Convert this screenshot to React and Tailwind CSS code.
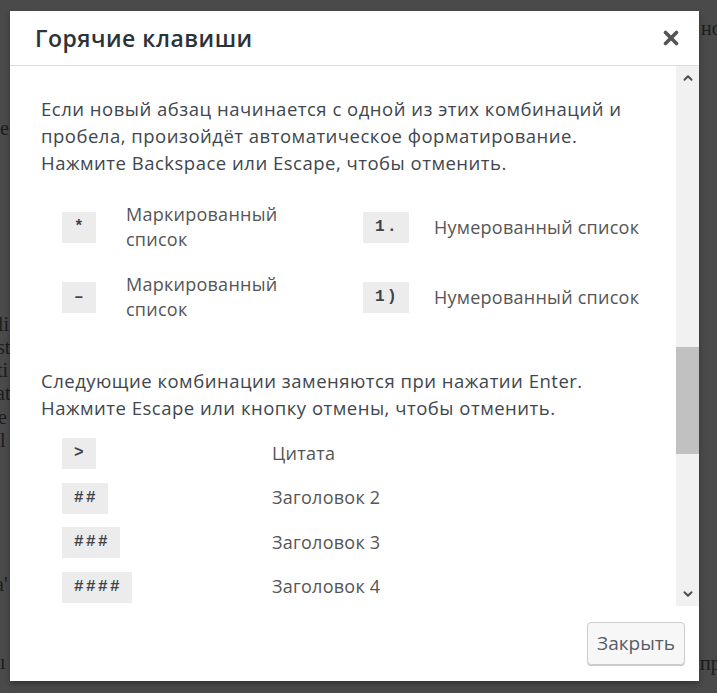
import React from 'react';
import { X, ChevronUp, ChevronDown } from 'lucide-react';

const UI_FONT = { fontFamily: '"Open Sans", "Noto Sans", sans-serif' };

const markdownRows = [
  { a: '*', aLabel: 'Маркированный список', b: '1.', bLabel: 'Нумерованный список' },
  { a: '–', aLabel: 'Маркированный список', b: '1)', bLabel: 'Нумерованный список' },
];

const enterRows = [
  { code: '>', label: 'Цитата' },
  { code: '##', label: 'Заголовок 2' },
  { code: '###', label: 'Заголовок 3' },
  { code: '####', label: 'Заголовок 4' },
];

function Kbd({ children }) {
  return (
    <code className="inline-flex h-[31px] items-center bg-[#ececec] pl-[12px] pr-[10px] font-['Liberation_Mono',monospace] text-[16px] font-bold tracking-[2.4px] text-[#3c434a]">
      {children}
    </code>
  );
}

// faint letters of the page that sits behind the overlay
const behind = [
  { t: 'e', x: 0, y: 118 },
  { t: 'li', x: -2, y: 314 },
  { t: 'st', x: -3, y: 337 },
  { t: 'ti', x: -3, y: 360 },
  { t: 'at', x: -4, y: 383 },
  { t: 'e', x: -2, y: 407 },
  { t: 'l', x: 0, y: 430 },
  { t: 'a\'', x: -5, y: 574 },
  { t: 'ı', x: 0, y: 652 },
  { t: 'но', x: 701, y: 18 },
  { t: 'пр', x: 700, y: 653 },
];

export default function App() {
  return (
    <div className="relative h-[693px] w-[717px] overflow-hidden bg-[#4a4a4a]">
      {behind.map((b, i) => (
        <span
          key={i}
          className="absolute font-['Liberation_Serif',serif] text-[20px] leading-none text-[#1c1c1c]"
          style={{ left: b.x, top: b.y }}
        >
          {b.t}
        </span>
      ))}

      {/* Dialog */}
      <div
        className="absolute left-[10px] top-[11px] flex h-[670px] w-[689px] flex-col bg-white shadow-[0_3px_6px_rgba(0,0,0,0.3)]"
        style={UI_FONT}
      >
        {/* Header */}
        <div className="flex h-[55px] shrink-0 items-center justify-between border-b border-[#dddddd] pl-[25px] pr-[17px]">
          <h1 className="text-[23px] font-semibold tracking-[0.5px] text-[#2c3338]">Горячие клавиши</h1>
          <button className="text-[#555]" aria-label="Закрыть">
            <X size={22} strokeWidth={4} />
          </button>
        </div>

        {/* Body */}
        <div className="flex min-h-0 flex-1">
          <div className="flex-1 overflow-hidden pl-[31px] pr-[10px] pt-[29px] text-[18.5px] leading-[27px] tracking-[0.5px] text-[#40464d]">
            <p>
              Если новый абзац начинается с одной из этих комбинаций и<br />
              пробела, произойдёт автоматическое форматирование.<br />
              Нажмите Backspace или Escape, чтобы отменить.
            </p>

            <div className="mt-[16px] text-[18px] tracking-[0.25px] text-[#555]">
              {markdownRows.map((r, i) => (
                <div key={i} className="grid h-[70px] grid-cols-[64px_237px_71px_1fr] items-center pl-[21px]">
                  <div><Kbd>{r.a}</Kbd></div>
                  <div className="w-[170px] leading-[25px]">{r.aLabel}</div>
                  <div><Kbd>{r.b}</Kbd></div>
                  <div>{r.bLabel}</div>
                </div>
              ))}
            </div>

            <p className="mt-[35px]">
              Следующие комбинации заменяются при нажатии Enter.<br />
              Нажмите Escape или кнопку отмены, чтобы отменить.
            </p>

            <div className="mt-[10px] text-[18px] tracking-[0.25px] text-[#555]">
              {enterRows.map((r, i) => (
                <div key={i} className="grid h-[44.5px] grid-cols-[210px_1fr] items-center pl-[21px]">
                  <div><Kbd>{r.code}</Kbd></div>
                  <div>{r.label}</div>
                </div>
              ))}
            </div>
          </div>

          {/* Scrollbar */}
          <div className="flex w-[23px] shrink-0 flex-col bg-[#f1f1f1]">
            <div className="flex h-[24px] items-center justify-center text-[#505050]">
              <ChevronUp size={14} strokeWidth={3.5} />
            </div>
            <div className="h-[257px]" />
            <div className="h-[107px] bg-[#c1c1c1]" />
            <div className="flex-1" />
            <div className="flex h-[24px] items-center justify-center text-[#505050]">
              <ChevronDown size={14} strokeWidth={3.5} />
            </div>
          </div>
        </div>

        {/* Footer */}
        <div className="flex h-[75px] shrink-0 items-center justify-end pr-[14px]">
          <button className="h-[43px] w-[98px] rounded-[4px] border border-[#cccccc] bg-[#f7f7f7] text-[19px] text-[#555d66] shadow-[0_1px_0_#ccc]">
            Закрыть
          </button>
        </div>
      </div>
    </div>
  );
}
